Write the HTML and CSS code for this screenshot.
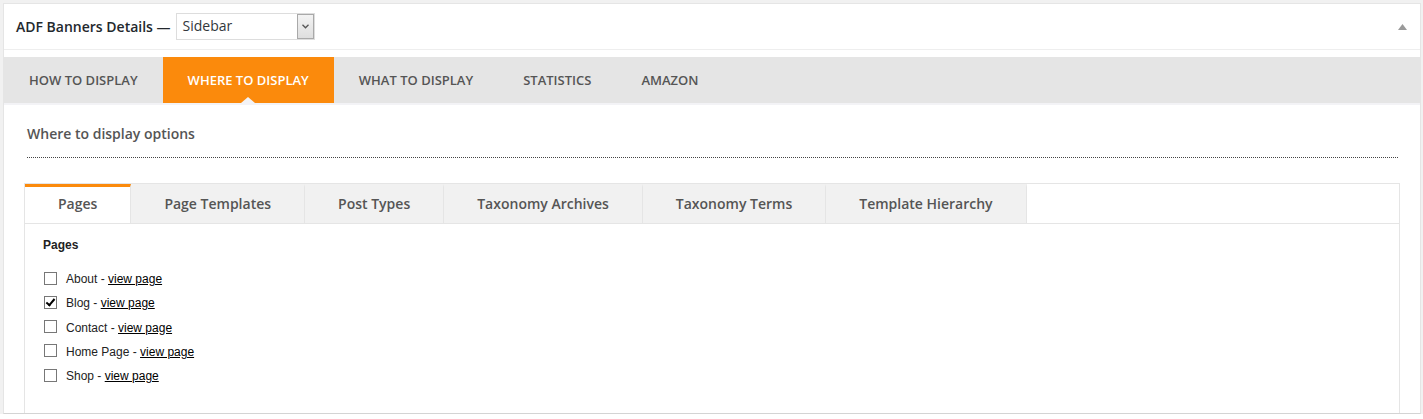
FILE: index.html
```html
<!DOCTYPE html>
<html lang="en">
<head>
  <meta charset="UTF-8">
  <meta name="viewport" content="width=device-width, initial-scale=1.0">
  <title>ADF Banners Details</title>
  <link rel="stylesheet" href="styles.css">
</head>
<body>
  <div class="wrap">
    <div class="postbox">
      <div class="postbox-header">
        <h2 class="postbox-title">ADF Banners Details &mdash;</h2>
        <div class="picker">
          <span class="picker-value">Sidebar</span>
          <span class="picker-arrow">
            <svg width="7" height="5" viewBox="0 0 7 5"><path d="M0.5 0.8 L3.5 3.8 L6.5 0.8" fill="none" stroke="#555" stroke-width="1.3"/></svg>
          </span>
        </div>
        <button class="toggle" aria-label="Toggle panel">
          <svg width="9" height="6" viewBox="0 0 9 6"><polygon points="4.5,0 9,6 0,6" fill="#9a9a9a"/></svg>
        </button>
      </div>

      <div class="inside">
        <!-- main sections -->
        <ul class="main-tabs">
          <li class="main-tab">How to display</li>
          <li class="main-tab active">Where to display</li>
          <li class="main-tab">What to display</li>
          <li class="main-tab">Statistics</li>
          <li class="main-tab">Amazon</li>
        </ul>

        <div class="section">
          <h3 class="section-title">Where to display options</h3>

          <div class="subtabs-box">
            <ul class="subtabs">
              <li class="subtab active">Pages</li>
              <li class="subtab">Page Templates</li>
              <li class="subtab">Post Types</li>
              <li class="subtab">Taxonomy Archives</li>
              <li class="subtab">Taxonomy Terms</li>
              <li class="subtab">Template Hierarchy</li>
            </ul>

            <div class="subtab-panel">
              <div class="panel-label">Pages</div>
              <ul class="page-list">
                <li class="page-row"><input type="checkbox" class="check"> <span>About - <a href="#">view page</a></span></li>
                <li class="page-row"><input type="checkbox" class="check" checked> <span>Blog - <a href="#">view page</a></span></li>
                <li class="page-row"><input type="checkbox" class="check"> <span>Contact - <a href="#">view page</a></span></li>
                <li class="page-row"><input type="checkbox" class="check"> <span>Home Page - <a href="#">view page</a></span></li>
                <li class="page-row"><input type="checkbox" class="check"> <span>Shop - <a href="#">view page</a></span></li>
              </ul>
            </div>
          </div>
        </div>
      </div>
    </div>
  </div>
</body>
</html>
```

FILE: styles.css
```css
body {
  margin: 0;
  background-color: #fff;
  font-family: "Open Sans", "Liberation Sans", sans-serif;
  color: #555;
}
ul {
  list-style: none;
  margin: 0;
  padding: 0;
}
.wrap {
  background-color: #f1f1f1;
  padding: 3px 2px 0 3px;
}
.postbox {
  background-color: #fff;
  border: 1px solid #e5e5e5;
  border-bottom: 1px solid #d4d4d4;
  box-shadow: 0 1px 0 #e6e6e6;
}
.postbox-header {
  display: flex;
  align-items: center;
  height: 45px;
  padding: 0 12px;
  border-bottom: 1px solid #eee;
}
.postbox-title {
  margin: 0;
  font-size: 14px;
  font-weight: 600;
  color: #23282d;
  line-height: 19px;
}
.picker {
  display: flex;
  align-items: stretch;
  width: 137px;
  height: 25px;
  margin-left: 5px;
  border: 1px solid #ddd;
  background-color: #fff;
}
.picker-value {
  flex: 1;
  padding-left: 6px;
  font-size: 14px;
  line-height: 24px;
  color: #32373c;
}
.picker-arrow {
  display: flex;
  align-items: center;
  justify-content: center;
  width: 15px;
  border: 1px solid #a9a9a9;
  background: linear-gradient(#f3f3f3, #dedede);
}
.toggle {
  margin-left: auto;
  margin-right: 1px;
  padding: 0;
  border: none;
  background: none;
  display: flex;
}
.inside {
  padding-top: 7px;
}
.main-tabs {
  display: flex;
  background-color: #e5e5e5;
  border-bottom: 2px solid #f3f3f6;
}
.main-tab {
  position: relative;
  padding: 1px 25px 0;
  font-size: 13px;
  font-weight: 600;
  line-height: 45px;
  text-transform: uppercase;
  color: #555;
}
.main-tab.active {
  background-color: #fb8a0c;
  color: #fff;
}
.main-tab.active::after {
  content: "";
  position: absolute;
  left: 50%;
  bottom: 0;
  margin-left: -7px;
  border-left: 7px solid transparent;
  border-right: 7px solid transparent;
  border-bottom: 6px solid #f3f3f6;
}
.section {
  padding: 0 20px;
}
.section-title {
  margin: 19px 2px 25px 3px;
  padding-bottom: 14px;
  border-bottom: 1px dotted #444;
  font-size: 14px;
  font-weight: 600;
  line-height: 19px;
  color: #555;
}
.subtabs-box {
  border: 1px solid #e5e5e5;
  border-bottom: none;
}
.subtabs {
  display: flex;
  border-bottom: 1px solid #e5e5e5;
}
.subtab {
  padding: 0 33px 2px;
  border-top: 3px solid #f1f1f1;
  border-right: 1px solid #e5e5e5;
  background-color: #f1f1f1;
  font-size: 14px;
  font-weight: 600;
  line-height: 34px;
  color: #555;
}
.subtab.active {
  background-color: #fff;
  border-top-color: #fb8a0c;
}
.subtab-panel {
  padding: 13px 18px 25px;
  font-family: "Liberation Sans", Arial, sans-serif;
  font-size: 12px;
  color: #222;
}
.panel-label {
  font-weight: bold;
  line-height: 16px;
  color: #222;
}
.page-list {
  margin-top: 14px;
}
.page-row {
  display: flex;
  align-items: center;
  height: 24.25px;
  line-height: 24px;
}
.page-row a {
  color: #000;
}
.check {
  appearance: none;
  position: relative;
  width: 13px;
  height: 13px;
  margin: 0 9px 2px 1px;
  border: 1px solid #777;
  border-radius: 0;
  background-color: #fff;
}
.check:checked::after {
  content: "";
  position: absolute;
  left: 3px;
  top: 0;
  width: 3px;
  height: 7px;
  border-right: 2px solid #000;
  border-bottom: 2px solid #000;
  transform: rotate(40deg);
}
```
